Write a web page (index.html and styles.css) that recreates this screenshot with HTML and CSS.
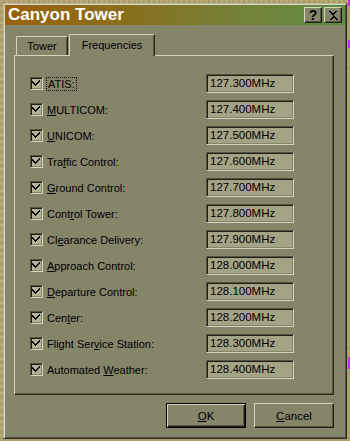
FILE: index.html
```html
<!DOCTYPE html>
<html>
<head>
<meta charset="utf-8">
<link rel="stylesheet" href="styles.css">
</head>
<body>
<div class="desk">
  <span class="speck s1"></span><span class="speck s2"></span><span class="speck s3"></span>
  <div class="window">
    <div class="titlebar">
      <span class="title">Canyon Tower</span>
      <div class="tbtns">
        <span class="tb">?</span>
        <span class="tb"><svg width="10" height="9" viewBox="0 0 10 9" shape-rendering="crispEdges"><path d="M1 0h2v1h1v1h2v-1h1v-1h2v1h-1v1h-1v1h-1v1h-0v1h1v1h1v1h1v1h1v1h-2v-1h-1v-1h-2v1h-1v1h-2v-1h1v-1h1v-1h1v-1h-0v-1h-1v-1h-1v-1h-1z" fill="#000"/></svg></span>
      </div>
    </div>
    <div class="body">
      <div class="tabs">
        <div class="tab">Tower</div>
        <div class="tab active">Frequencies</div>
      </div>
      <div class="panel">
        <div class="row"><span class="cb"></span><span class="lbl"><span class="focus">ATIS:</span></span><span class="field">127.300MHz</span></div>
        <div class="row"><span class="cb"></span><span class="lbl"><u>M</u>ULTICOM:</span><span class="field">127.400MHz</span></div>
        <div class="row"><span class="cb"></span><span class="lbl"><u>U</u>NICOM:</span><span class="field">127.500MHz</span></div>
        <div class="row"><span class="cb"></span><span class="lbl">Tra<u>f</u>fic Control:</span><span class="field">127.600MHz</span></div>
        <div class="row"><span class="cb"></span><span class="lbl"><u>G</u>round Control:</span><span class="field">127.700MHz</span></div>
        <div class="row"><span class="cb"></span><span class="lbl">Cont<u>r</u>ol Tower:</span><span class="field">127.800MHz</span></div>
        <div class="row"><span class="cb"></span><span class="lbl">Cl<u>e</u>arance Delivery:</span><span class="field">127.900MHz</span></div>
        <div class="row"><span class="cb"></span><span class="lbl"><u>A</u>pproach Control:</span><span class="field">128.000MHz</span></div>
        <div class="row"><span class="cb"></span><span class="lbl"><u>D</u>eparture Control:</span><span class="field">128.100MHz</span></div>
        <div class="row"><span class="cb"></span><span class="lbl">Cen<u>t</u>er:</span><span class="field">128.200MHz</span></div>
        <div class="row"><span class="cb"></span><span class="lbl">Flight Ser<u>v</u>ice Station:</span><span class="field">128.300MHz</span></div>
        <div class="row"><span class="cb"></span><span class="lbl">Automated <u>W</u>eather:</span><span class="field">128.400MHz</span></div>
      </div>
      <div class="actions">
        <span class="btn default"><u>O</u>K</span>
        <span class="btn"><u>C</u>ancel</span>
      </div>
    </div>
  </div>
</div>
</body>
</html>
```
FILE: styles.css
```css
html, body {
  margin: 0;
  padding: 0;
}
body {
  width: 350px;
  height: 441px;
  overflow: hidden;
  background: #ab9d6b;
  font-family: "Liberation Sans", Arial, sans-serif;
  font-size: 11px;
  color: #000;
}
.desk {
  position: relative;
  width: 350px;
  height: 441px;
  padding: 3px 0 0 3px;
  box-sizing: border-box;
  background:
    radial-gradient(circle at 30% 20%, rgba(230,215,160,0.25) 0 1px, transparent 2px) 0 0 / 5px 7px,
    radial-gradient(circle at 70% 60%, rgba(90,75,35,0.18) 0 1px, transparent 2px) 0 0 / 6px 5px,
    #ad9f6c;
}
.speck {
  position: absolute;
  left: 348px;
  width: 2px;
  background: #e020e0;
}
.s1 { top: 0; height: 6px; }
.s2 { top: 40px; height: 8px; }
.s3 { top: 357px; height: 12px; }
.window {
  width: 344px;
  height: 436px;
  box-sizing: border-box;
  background: #85856a;
  border-top: 1px solid #b9b9a0;
  border-left: 1px solid #b9b9a0;
  border-right: 1px solid #2a2a20;
  border-bottom: 1px solid #2a2a20;
  box-shadow: inset 1px 1px 0 #d8d8c2, inset -1px -1px 0 #55553f;
  padding: 1px;
  display: flex;
  flex-direction: column;
}
.titlebar {
  height: 20px;
  flex: none;
  display: flex;
  align-items: center;
  justify-content: space-between;
  padding: 0 3px 0 3px;
  background: linear-gradient(to right, #9a620c 0%, #8a6e1c 35%, #74823a 70%, #5e8c40 100%);
}
.title {
  color: #fff;
  font-weight: bold;
  font-size: 17px;
  line-height: 20px;
}
.tbtns {
  display: flex;
  gap: 2px;
}
.tb {
  width: 18px;
  height: 16px;
  box-sizing: border-box;
  display: flex;
  align-items: center;
  justify-content: center;
  background: #85856a;
  border-top: 1px solid #d8d8c2;
  border-left: 1px solid #d8d8c2;
  border-right: 1px solid #1e1e16;
  border-bottom: 1px solid #1e1e16;
  box-shadow: inset -1px -1px 0 #55553f;
  font-weight: bold;
  font-size: 14px;
  line-height: 14px;
}
.body {
  flex: 1;
  display: flex;
  flex-direction: column;
  padding: 9px 0 0 9px;
}
.tabs {
  display: flex;
  align-items: flex-end;
  height: 21px;
  padding-left: 2px;
  position: relative;
  z-index: 1;
}
.tab {
  width: 52px;
  height: 19px;
  box-sizing: border-box;
  border-top: 1px solid #d4d4bc;
  border-left: 1px solid #d4d4bc;
  border-right: 1px solid #2a2a20;
  border-top-left-radius: 2px;
  border-top-right-radius: 2px;
  box-shadow: inset -1px 0 0 #55553f;
  text-align: center;
  line-height: 17px;
  padding-top: 1px;
  background: #85856a;
}
.tab.active {
  width: 86px;
  height: 22px;
  margin-bottom: -1px;
  margin-left: 1px;
  line-height: 18px;
  padding-top: 1px;
}
.panel {
  width: 320px;
  height: 340px;
  box-sizing: border-box;
  border-top: 1px solid #d4d4bc;
  border-left: 1px solid #d4d4bc;
  border-right: 1px solid #2a2a20;
  border-bottom: 1px solid #2a2a20;
  box-shadow: inset -1px -1px 0 #55553f;
  padding: 18px 0 0 15px;
  display: flex;
  flex-direction: column;
  gap: 7px;
}
.row {
  display: flex;
  align-items: center;
  height: 19px;
}
.cb {
  width: 13px;
  height: 13px;
  box-sizing: border-box;
  flex: none;
  border-top: 1px solid #55553f;
  border-left: 1px solid #55553f;
  border-right: 1px solid #d4d4bc;
  border-bottom: 1px solid #d4d4bc;
  box-shadow: inset 1px 1px 0 #1e1e16, inset -1px -1px 0 #85856a;
  background: #b0b095 url("data:image/svg+xml,%3Csvg xmlns='http://www.w3.org/2000/svg' width='11' height='11' shape-rendering='crispEdges'%3E%3Cpath d='M8 2h1v1h0v1h-1v1h-1v1h-1v1h-1v1h-1v-1h-1v-1h-1v-1h-1v-2h1v1h1v1h1v1h1v-1h1v-1h1v-1h1z' fill='%23000'/%3E%3C/svg%3E") no-repeat 0 0;
}
.lbl {
  width: 159px;
  flex: none;
  margin-left: 4px;
  white-space: nowrap;
}
.focus {
  outline: 1px dotted #000;
  padding: 0 1px;
}
.field {
  width: 88px;
  height: 19px;
  box-sizing: border-box;
  flex: none;
  border-top: 1px solid #55553f;
  border-left: 1px solid #55553f;
  border-right: 1px solid #d4d4bc;
  border-bottom: 1px solid #d4d4bc;
  box-shadow: inset 1px 1px 0 #1e1e16, inset -1px -1px 0 #85856a;
  background: #a3a386;
  padding-left: 3px;
  line-height: 17px;
  font-size: 11.5px;
}
.actions {
  width: 320px;
  display: flex;
  justify-content: flex-end;
  gap: 8px;
  margin-top: 8px;
}
.btn {
  width: 80px;
  height: 25px;
  box-sizing: border-box;
  display: flex;
  align-items: center;
  justify-content: center;
  border-top: 1px solid #d4d4bc;
  border-left: 1px solid #d4d4bc;
  border-right: 1px solid #1e1e16;
  border-bottom: 1px solid #1e1e16;
  box-shadow: inset -1px -1px 0 #55553f;
  font-size: 11.5px;
}
.btn.default {
  border: 1px solid #000;
  box-shadow: inset 1px 1px 0 #d4d4bc, inset -1px -1px 0 #1e1e16, inset -2px -2px 0 #55553f;
}
u {
  text-decoration: underline;
  text-underline-offset: 1px;
}
```
